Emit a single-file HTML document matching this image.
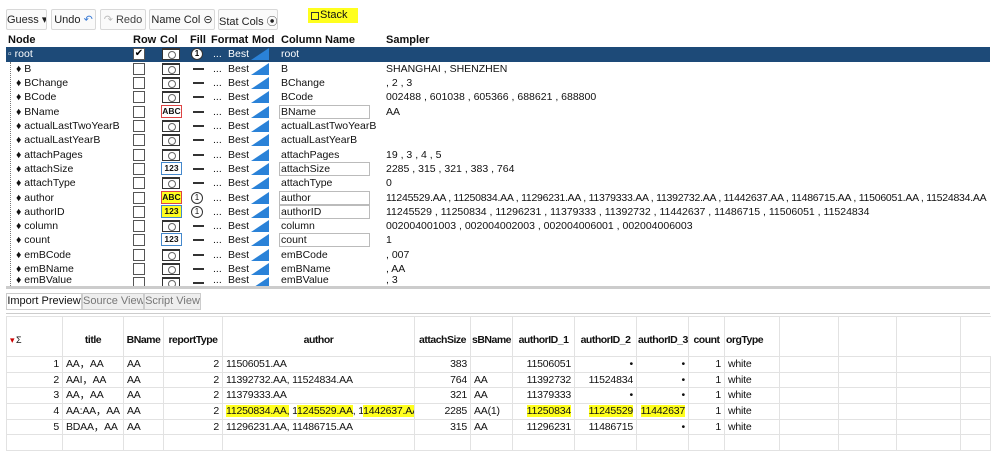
<!DOCTYPE html>
<html><head><meta charset="utf-8"><style>
*{margin:0;padding:0;box-sizing:border-box}
body{width:998px;height:443px;background:#fff;font-family:"Liberation Sans","Noto Sans CJK SC",sans-serif;font-size:10.5px;color:#111;position:relative;overflow:hidden}
.btn{position:absolute;top:9px;height:21px;border:1px solid #d8d8d8;border-radius:2px;background:#fafafa;padding:3px 0;font-size:11px;color:#222;white-space:nowrap;text-align:center;overflow:hidden}
.hdr{position:absolute;top:34px;font-weight:bold;font-size:11px}
.row{position:absolute;left:6px;width:984px;height:14px}
.row span{position:absolute;top:0;line-height:14px;white-space:nowrap}
.cb{position:absolute;left:127px;top:1px;width:12px;height:12px;border:1px solid #555;background:#fff}
.ic{position:absolute;left:156px;top:1px;width:18px;height:12px;border:1px solid #333;border-top-width:2px}
.ic::after{content:"";position:absolute;left:5px;top:1px;width:6px;height:6px;border:1px solid #666;border-radius:50%}
.abc{position:absolute;left:155px;top:0;width:21px;height:13px;border:1px solid #d44;font-size:8.5px;font-weight:bold;text-align:center;line-height:11px}
.n123{position:absolute;left:155px;top:0;width:21px;height:13px;border:1px solid #48c;font-size:8.5px;font-weight:bold;text-align:center;line-height:11px}
.dash{position:absolute;left:187px;top:6px;width:11px;height:2px;background:#333}
.circ{position:absolute;left:185px;top:1px;width:12px;height:12px;border:1px solid #333;border-radius:50%;font-size:8px;text-align:center;line-height:10px}
.tri{position:absolute;left:245px;top:1px;width:0;height:0;border-left:18px solid transparent;border-bottom:12px solid #2a82d8}
.box{position:absolute;left:273px;top:0;width:91px;height:14px;border:1px solid #bbb}
.hl{background:#ffff1e}
table{border-collapse:collapse;position:absolute;left:6px;top:316px;table-layout:fixed;width:984px}
td{border:1px solid #e2e2e2;height:15.7px;padding:0 3px;font-size:10.5px;white-space:nowrap;line-height:13px;overflow:hidden;letter-spacing:-0.2px}
th{border:1px solid #e2e2e2;height:40px;padding:0 1px;font-size:10.5px;font-weight:bold;vertical-align:bottom;padding-bottom:10px;white-space:nowrap;overflow:hidden;letter-spacing:-0.5px}
.r{text-align:right}
.tab{position:absolute;top:293px;height:17px;border:1px solid #ccc;font-size:11px;padding-top:1px;text-align:center;white-space:nowrap;overflow:hidden}
</style></head><body>
<div class="btn" style="left:6px;width:41px">Guess ▾</div>
<div class="btn" style="left:51px;width:45px">Undo <span style="color:#3a7bd5">↶</span></div>
<div class="btn" style="left:100px;width:46px;color:#444"><span style="color:#bbb">↷</span> Redo</div>
<div class="btn" style="left:149px;width:66px">Name Col ⊝</div>
<div class="btn" style="left:218px;width:60px">Stat Cols ⦿</div>
<div style="position:absolute;left:308px;top:8px;width:50px;height:15px;background:#ffff1e;font-size:11px;line-height:15px;padding-left:12px">Stack<span style="position:absolute;left:3px;top:4px;width:8px;height:8px;border:1px solid #333"></span></div>

<div class="hdr" style="left:8px">Node</div>
<div class="hdr" style="left:133px">Row</div>
<div class="hdr" style="left:160px">Col</div>
<div class="hdr" style="left:190px">Fill</div>
<div class="hdr" style="left:211px">Format</div>
<div class="hdr" style="left:252px">Mod</div>
<div class="hdr" style="left:281px">Column Name</div>
<div class="hdr" style="left:386px">Sampler</div>

<div class="row" style="top:47px;background:#1d4a78;color:#fff;height:15px"><span style="left:2px">▫ root</span><div class="cb" style="background:#fff;color:#000;font-size:10px;line-height:10px;text-align:center">✔</div><div class="ic" style="background:#fff"></div><div class="circ" style="background:#fff;color:#000;font-weight:bold">1</div><span style="left:207px">...</span><span style="left:222px">Best</span><div class="tri"></div><span style="left:275px">root</span></div>

<div style="position:absolute;left:10px;top:62px;height:224px;border-left:1px dotted #777"></div>

<div class="row" style="top:62px"><span style="left:10px">♦ B</span><div class="cb"></div><div class="ic"></div><div class="dash"></div><span style="left:207px">...</span><span style="left:222px">Best</span><div class="tri"></div><span style="left:275px">B</span><span style="left:380px">SHANGHAI , SHENZHEN</span></div>
<div class="row" style="top:76px"><span style="left:10px">♦ BChange</span><div class="cb"></div><div class="ic"></div><div class="dash"></div><span style="left:207px">...</span><span style="left:222px">Best</span><div class="tri"></div><span style="left:275px">BChange</span><span style="left:380px">, 2 , 3</span></div>
<div class="row" style="top:90px"><span style="left:10px">♦ BCode</span><div class="cb"></div><div class="ic"></div><div class="dash"></div><span style="left:207px">...</span><span style="left:222px">Best</span><div class="tri"></div><span style="left:275px">BCode</span><span style="left:380px">002488 , 601038 , 605366 , 688621 , 688800</span></div>
<div class="row" style="top:105px"><span style="left:10px">♦ BName</span><div class="cb"></div><div class="abc">ABC</div><div class="dash"></div><span style="left:207px">...</span><span style="left:222px">Best</span><div class="tri"></div><div class="box"></div><span style="left:275px">BName</span><span style="left:380px">AA</span></div>
<div class="row" style="top:119px"><span style="left:10px">♦ actualLastTwoYearB</span><div class="cb"></div><div class="ic"></div><div class="dash"></div><span style="left:207px">...</span><span style="left:222px">Best</span><div class="tri"></div><span style="left:275px">actualLastTwoYearB</span></div>
<div class="row" style="top:133px"><span style="left:10px">♦ actualLastYearB</span><div class="cb"></div><div class="ic"></div><div class="dash"></div><span style="left:207px">...</span><span style="left:222px">Best</span><div class="tri"></div><span style="left:275px">actualLastYearB</span></div>
<div class="row" style="top:148px"><span style="left:10px">♦ attachPages</span><div class="cb"></div><div class="ic"></div><div class="dash"></div><span style="left:207px">...</span><span style="left:222px">Best</span><div class="tri"></div><span style="left:275px">attachPages</span><span style="left:380px">19 , 3 , 4 , 5</span></div>
<div class="row" style="top:162px"><span style="left:10px">♦ attachSize</span><div class="cb"></div><div class="n123">123</div><div class="dash"></div><span style="left:207px">...</span><span style="left:222px">Best</span><div class="tri"></div><div class="box"></div><span style="left:275px">attachSize</span><span style="left:380px">2285 , 315 , 321 , 383 , 764</span></div>
<div class="row" style="top:176px"><span style="left:10px">♦ attachType</span><div class="cb"></div><div class="ic"></div><div class="dash"></div><span style="left:207px">...</span><span style="left:222px">Best</span><div class="tri"></div><span style="left:275px">attachType</span><span style="left:380px">0</span></div>
<div class="row" style="top:191px"><span style="left:10px">♦ author</span><div class="cb"></div><div class="abc hl">ABC</div><div class="circ">1</div><span style="left:207px">...</span><span style="left:222px">Best</span><div class="tri"></div><div class="box"></div><span style="left:275px">author</span><span style="left:380px;letter-spacing:-0.25px">11245529.AA , 11250834.AA , 11296231.AA , 11379333.AA , 11392732.AA , 11442637.AA , 11486715.AA , 11506051.AA , 11524834.AA</span></div>
<div class="row" style="top:205px"><span style="left:10px">♦ authorID</span><div class="cb"></div><div class="n123 hl">123</div><div class="circ">1</div><span style="left:207px">...</span><span style="left:222px">Best</span><div class="tri"></div><div class="box"></div><span style="left:275px">authorID</span><span style="left:380px">11245529 , 11250834 , 11296231 , 11379333 , 11392732 , 11442637 , 11486715 , 11506051 , 11524834</span></div>
<div class="row" style="top:219px"><span style="left:10px">♦ column</span><div class="cb"></div><div class="ic"></div><div class="dash"></div><span style="left:207px">...</span><span style="left:222px">Best</span><div class="tri"></div><span style="left:275px">column</span><span style="left:380px">002004001003 , 002004002003 , 002004006001 , 002004006003</span></div>
<div class="row" style="top:233px"><span style="left:10px">♦ count</span><div class="cb"></div><div class="n123">123</div><div class="dash"></div><span style="left:207px">...</span><span style="left:222px">Best</span><div class="tri"></div><div class="box"></div><span style="left:275px">count</span><span style="left:380px">1</span></div>
<div class="row" style="top:248px"><span style="left:10px">♦ emBCode</span><div class="cb"></div><div class="ic"></div><div class="dash"></div><span style="left:207px">...</span><span style="left:222px">Best</span><div class="tri"></div><span style="left:275px">emBCode</span><span style="left:380px">, 007</span></div>
<div class="row" style="top:262px"><span style="left:10px">♦ emBName</span><div class="cb"></div><div class="ic"></div><div class="dash"></div><span style="left:207px">...</span><span style="left:222px">Best</span><div class="tri"></div><span style="left:275px">emBName</span><span style="left:380px">, AA</span></div>
<div class="row" style="top:276px;height:10px;overflow:hidden"><span style="left:10px;top:-3px">♦ emBValue</span><div class="cb"></div><div class="ic"></div><div class="dash"></div><span style="left:207px;top:-3px">...</span><span style="left:222px;top:-3px">Best</span><div class="tri"></div><span style="left:275px;top:-3px">emBValue</span><span style="left:380px;top:-3px">, 3</span></div>
<div style="position:absolute;left:6px;top:286px;width:984px;height:3px;background:#ccc"></div>

<div class="tab" style="left:6px;width:76px;background:#fff">Import Preview</div>
<div class="tab" style="left:82px;width:62px;background:#eee;color:#777">Source View</div>
<div class="tab" style="left:144px;width:57px;background:#eee;color:#777">Script View</div>
<div style="position:absolute;left:6px;top:313px;width:984px;height:1px;background:#ccc"></div>

<table>
<colgroup><col style="width:56px"><col style="width:61px"><col style="width:40px"><col style="width:59px"><col style="width:192px"><col style="width:56px"><col style="width:42px"><col style="width:62px"><col style="width:62px"><col style="width:52px"><col style="width:36px"><col style="width:55px"><col style="width:59px"><col style="width:58px"><col style="width:64px"><col style="width:30px"></colgroup>
<tr><th style="text-align:left;font-weight:normal;font-size:9px;padding-left:3px"><span style="color:#c00">▾</span> Σ</th><th>title</th><th>BName</th><th>reportType</th><th>author</th><th>attachSize</th><th>sBName</th><th>authorID_1</th><th>authorID_2</th><th>authorID_3</th><th>count</th><th style="text-align:left">orgType</th><th></th><th></th><th></th><th style="border-right:none"></th></tr>
<tr><td class="r">1</td><td>AA，AA</td><td>AA</td><td class="r">2</td><td>11506051.AA</td><td class="r">383</td><td></td><td class="r">11506051</td><td class="r">•</td><td class="r">•</td><td class="r">1</td><td>white</td><td></td><td></td><td></td><td></td></tr>
<tr><td class="r">2</td><td>AAI，AA</td><td>AA</td><td class="r">2</td><td>11392732.AA, 11524834.AA</td><td class="r">764</td><td>AA</td><td class="r">11392732</td><td class="r">11524834</td><td class="r">•</td><td class="r">1</td><td>white</td><td></td><td></td><td></td><td></td></tr>
<tr><td class="r">3</td><td>AA，AA</td><td>AA</td><td class="r">2</td><td>11379333.AA</td><td class="r">321</td><td>AA</td><td class="r">11379333</td><td class="r">•</td><td class="r">•</td><td class="r">1</td><td>white</td><td></td><td></td><td></td><td></td></tr>
<tr><td class="r">4</td><td>AA:AA，AA</td><td>AA</td><td class="r">2</td><td><span class="hl">11250834.AA,</span> 1<span class="hl">1245529.AA</span>, 1<span class="hl">1442637.AA</span></td><td class="r">2285</td><td>AA(1)</td><td class="r"><span class="hl">11250834</span></td><td class="r"><span class="hl">11245529</span></td><td class="r"><span class="hl">11442637</span></td><td class="r">1</td><td>white</td><td></td><td></td><td></td><td></td></tr>
<tr><td class="r">5</td><td>BDAA，AA</td><td>AA</td><td class="r">2</td><td>11296231.AA, 11486715.AA</td><td class="r">315</td><td>AA</td><td class="r">11296231</td><td class="r">11486715</td><td class="r">•</td><td class="r">1</td><td>white</td><td></td><td></td><td></td><td></td></tr>
<tr><td style="height:14px"></td><td></td><td></td><td></td><td></td><td></td><td></td><td></td><td></td><td></td><td></td><td></td><td></td><td></td><td></td><td></td></tr>
</table>
</body></html>
